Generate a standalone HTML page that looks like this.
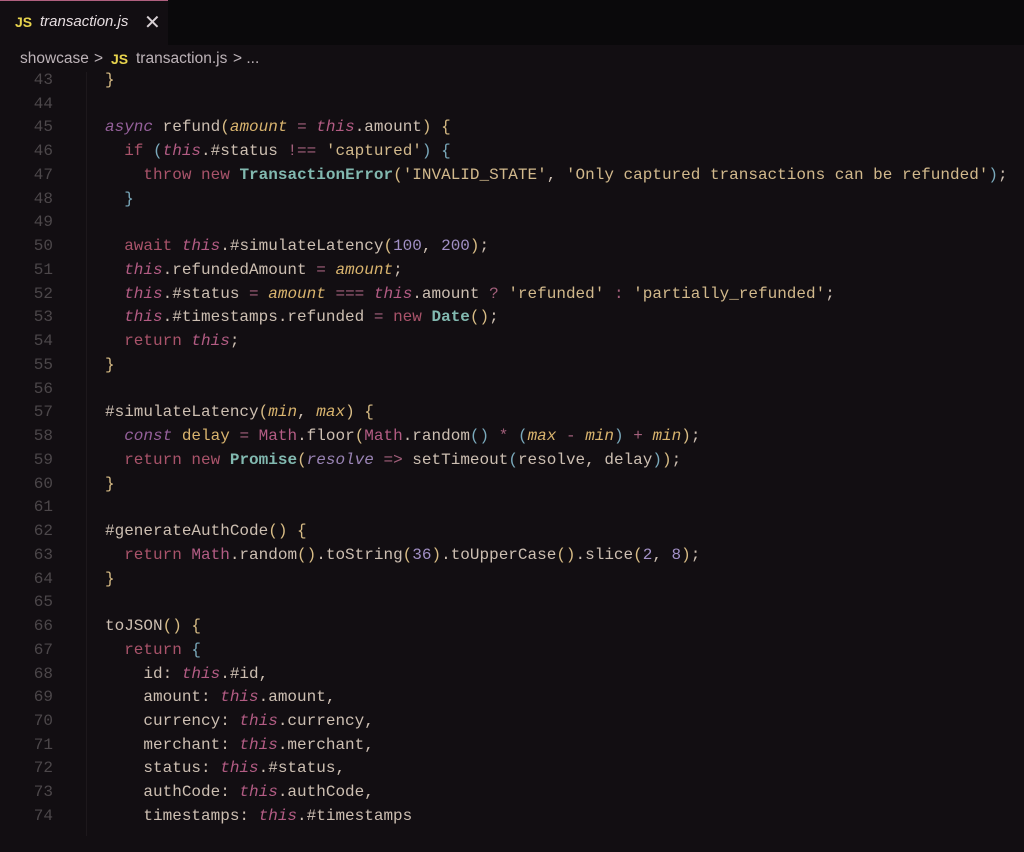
<!DOCTYPE html>
<html><head><meta charset="utf-8"><style>
body{margin:0;width:1024px;height:836px;background:#120e12;overflow:hidden;position:relative;font-family:"Liberation Sans",sans-serif}
.tabs{position:absolute;top:0;left:0;width:1024px;height:45px;background:#0a090b}
.tab{position:absolute;left:0;top:0;width:168px;height:45px;background:#120e12;border-top:1px solid #b0607f;box-sizing:border-box}
.tab .js{position:absolute;left:15px;top:13px;color:#e8d44d;font-weight:bold;font-size:14px}
.tab .nm{position:absolute;left:40px;top:12px;color:#e6dde0;font-style:italic;font-size:15px}
.tab .x{position:absolute;left:144px;top:9px;color:#d8d0d4;font-size:20px}
.bc{position:absolute;top:45px;left:0;width:1024px;height:27px;background:#120e12;z-index:2;color:#bdb3b8;font-size:15.5px}
.bc span{position:absolute;top:5px}
.code{position:absolute;top:69px;left:0;width:1024px;font-family:"Liberation Mono",monospace;font-size:16px;line-height:23.74px;color:#cdbfb2;white-space:pre}
.ln{position:absolute;left:0;width:53px;text-align:right;color:#4c474a}
.tx{position:absolute;left:105px}
.gut{position:absolute;left:86px;top:72px;width:1px;height:764px;background:#1d181c}
.k{color:#a9536a}.kw{color:#94609a;font-style:italic}.t{color:#b35c84;font-style:italic}.p{color:#d9b46e;font-style:italic}
.s{color:#d2b98c}.n{color:#a290c6}.c{color:#82b9b0;font-weight:bold}.op{color:#a4607c}.b{color:#d8bc85}.cb{color:#7aa9bb}.pr{color:#cdbfb2}
</style></head><body>
<div class="tabs"><div class="tab"><span class="js">JS</span><span class="nm">transaction.js</span><span class="x">✕</span></div></div>
<div class="bc"><span style="left:20px">showcase</span><span style="left:94px">&gt;</span><span style="left:111px;color:#e8d44d;font-weight:bold;font-size:14px;top:6px">JS</span><span style="left:136px">transaction.js</span><span style="left:233px">&gt; ...</span></div>
<div class="gut"></div>
<div class="code">
<div class="ln" style="top:0">43</div><div class="tx" style="top:0"><span class="b">}</span></div>
<div class="ln" style="top:23.74px">44</div>
<div class="ln" style="top:47.48px">45</div><div class="tx" style="top:47.48px"><span class="kw">async</span> refund<span class="b">(</span><span class="p">amount</span> <span class="op">=</span> <span class="t">this</span>.amount<span class="b">)</span> <span class="b">{</span></div>
<div class="ln" style="top:71.22px">46</div><div class="tx" style="top:71.22px">  <span class="k">if</span> <span class="cb">(</span><span class="t">this</span>.#status <span class="op">!==</span> <span class="s">'captured'</span><span class="cb">)</span> <span class="cb">{</span></div>
<div class="ln" style="top:94.96px">47</div><div class="tx" style="top:94.96px">    <span class="k">throw</span> <span class="k">new</span> <span class="c">TransactionError</span><span class="b">(</span><span class="s">'INVALID_STATE'</span>, <span class="s">'Only captured transactions can be refunded'</span><span class="cb">)</span>;</div>
<div class="ln" style="top:118.7px">48</div><div class="tx" style="top:118.7px">  <span class="cb">}</span></div>
<div class="ln" style="top:142.44px">49</div>
<div class="ln" style="top:166.18px">50</div><div class="tx" style="top:166.18px">  <span class="k">await</span> <span class="t">this</span>.#simulateLatency<span class="b">(</span><span class="n">100</span>, <span class="n">200</span><span class="b">)</span>;</div>
<div class="ln" style="top:189.92px">51</div><div class="tx" style="top:189.92px">  <span class="t">this</span>.refundedAmount <span class="op">=</span> <span class="p">amount</span>;</div>
<div class="ln" style="top:213.66px">52</div><div class="tx" style="top:213.66px">  <span class="t">this</span>.#status <span class="op">=</span> <span class="p">amount</span> <span class="op">===</span> <span class="t">this</span>.amount <span class="op">?</span> <span class="s">'refunded'</span> <span class="op">:</span> <span class="s">'partially_refunded'</span>;</div>
<div class="ln" style="top:237.4px">53</div><div class="tx" style="top:237.4px">  <span class="t">this</span>.#timestamps.refunded <span class="op">=</span> <span class="k">new</span> <span class="c">Date</span><span class="b">()</span>;</div>
<div class="ln" style="top:261.14px">54</div><div class="tx" style="top:261.14px">  <span class="k">return</span> <span class="t">this</span>;</div>
<div class="ln" style="top:284.88px">55</div><div class="tx" style="top:284.88px"><span class="b">}</span></div>
<div class="ln" style="top:308.62px">56</div>
<div class="ln" style="top:332.36px">57</div><div class="tx" style="top:332.36px">#simulateLatency<span class="b">(</span><span class="p">min</span>, <span class="p">max</span><span class="b">)</span> <span class="b">{</span></div>
<div class="ln" style="top:356.1px">58</div><div class="tx" style="top:356.1px">  <span class="kw">const</span> <span style="color:#d9b46e">delay</span> <span class="op">=</span> <span style="color:#b35c84">Math</span>.floor<span class="b">(</span><span style="color:#b35c84">Math</span>.random<span class="cb">()</span> <span class="op">*</span> <span class="cb">(</span><span class="p">max</span> <span class="op">-</span> <span class="p">min</span><span class="cb">)</span> <span class="op">+</span> <span class="p">min</span><span class="b">)</span>;</div>
<div class="ln" style="top:379.84px">59</div><div class="tx" style="top:379.84px">  <span class="k">return</span> <span class="k">new</span> <span class="c">Promise</span><span class="b">(</span><span style="color:#9a84b5;font-style:italic">resolve</span> <span class="op">=&gt;</span> setTimeout<span class="cb">(</span>resolve, delay<span class="cb">)</span><span class="b">)</span>;</div>
<div class="ln" style="top:403.58px">60</div><div class="tx" style="top:403.58px"><span class="b">}</span></div>
<div class="ln" style="top:427.32px">61</div>
<div class="ln" style="top:451.06px">62</div><div class="tx" style="top:451.06px">#generateAuthCode<span class="b">()</span> <span class="b">{</span></div>
<div class="ln" style="top:474.8px">63</div><div class="tx" style="top:474.8px">  <span class="k">return</span> <span style="color:#b35c84">Math</span>.random<span class="b">()</span>.toString<span class="b">(</span><span class="n">36</span><span class="b">)</span>.toUpperCase<span class="b">()</span>.slice<span class="b">(</span><span class="n">2</span>, <span class="n">8</span><span class="b">)</span>;</div>
<div class="ln" style="top:498.54px">64</div><div class="tx" style="top:498.54px"><span class="b">}</span></div>
<div class="ln" style="top:522.28px">65</div>
<div class="ln" style="top:546.02px">66</div><div class="tx" style="top:546.02px">toJSON<span class="b">()</span> <span class="b">{</span></div>
<div class="ln" style="top:569.76px">67</div><div class="tx" style="top:569.76px">  <span class="k">return</span> <span class="cb">{</span></div>
<div class="ln" style="top:593.5px">68</div><div class="tx" style="top:593.5px">    id: <span class="t">this</span>.#id,</div>
<div class="ln" style="top:617.24px">69</div><div class="tx" style="top:617.24px">    amount: <span class="t">this</span>.amount,</div>
<div class="ln" style="top:640.98px">70</div><div class="tx" style="top:640.98px">    currency: <span class="t">this</span>.currency,</div>
<div class="ln" style="top:664.72px">71</div><div class="tx" style="top:664.72px">    merchant: <span class="t">this</span>.merchant,</div>
<div class="ln" style="top:688.46px">72</div><div class="tx" style="top:688.46px">    status: <span class="t">this</span>.#status,</div>
<div class="ln" style="top:712.2px">73</div><div class="tx" style="top:712.2px">    authCode: <span class="t">this</span>.authCode,</div>
<div class="ln" style="top:735.94px">74</div><div class="tx" style="top:735.94px">    timestamps: <span class="t">this</span>.#timestamps</div>
</div>
</body></html>
